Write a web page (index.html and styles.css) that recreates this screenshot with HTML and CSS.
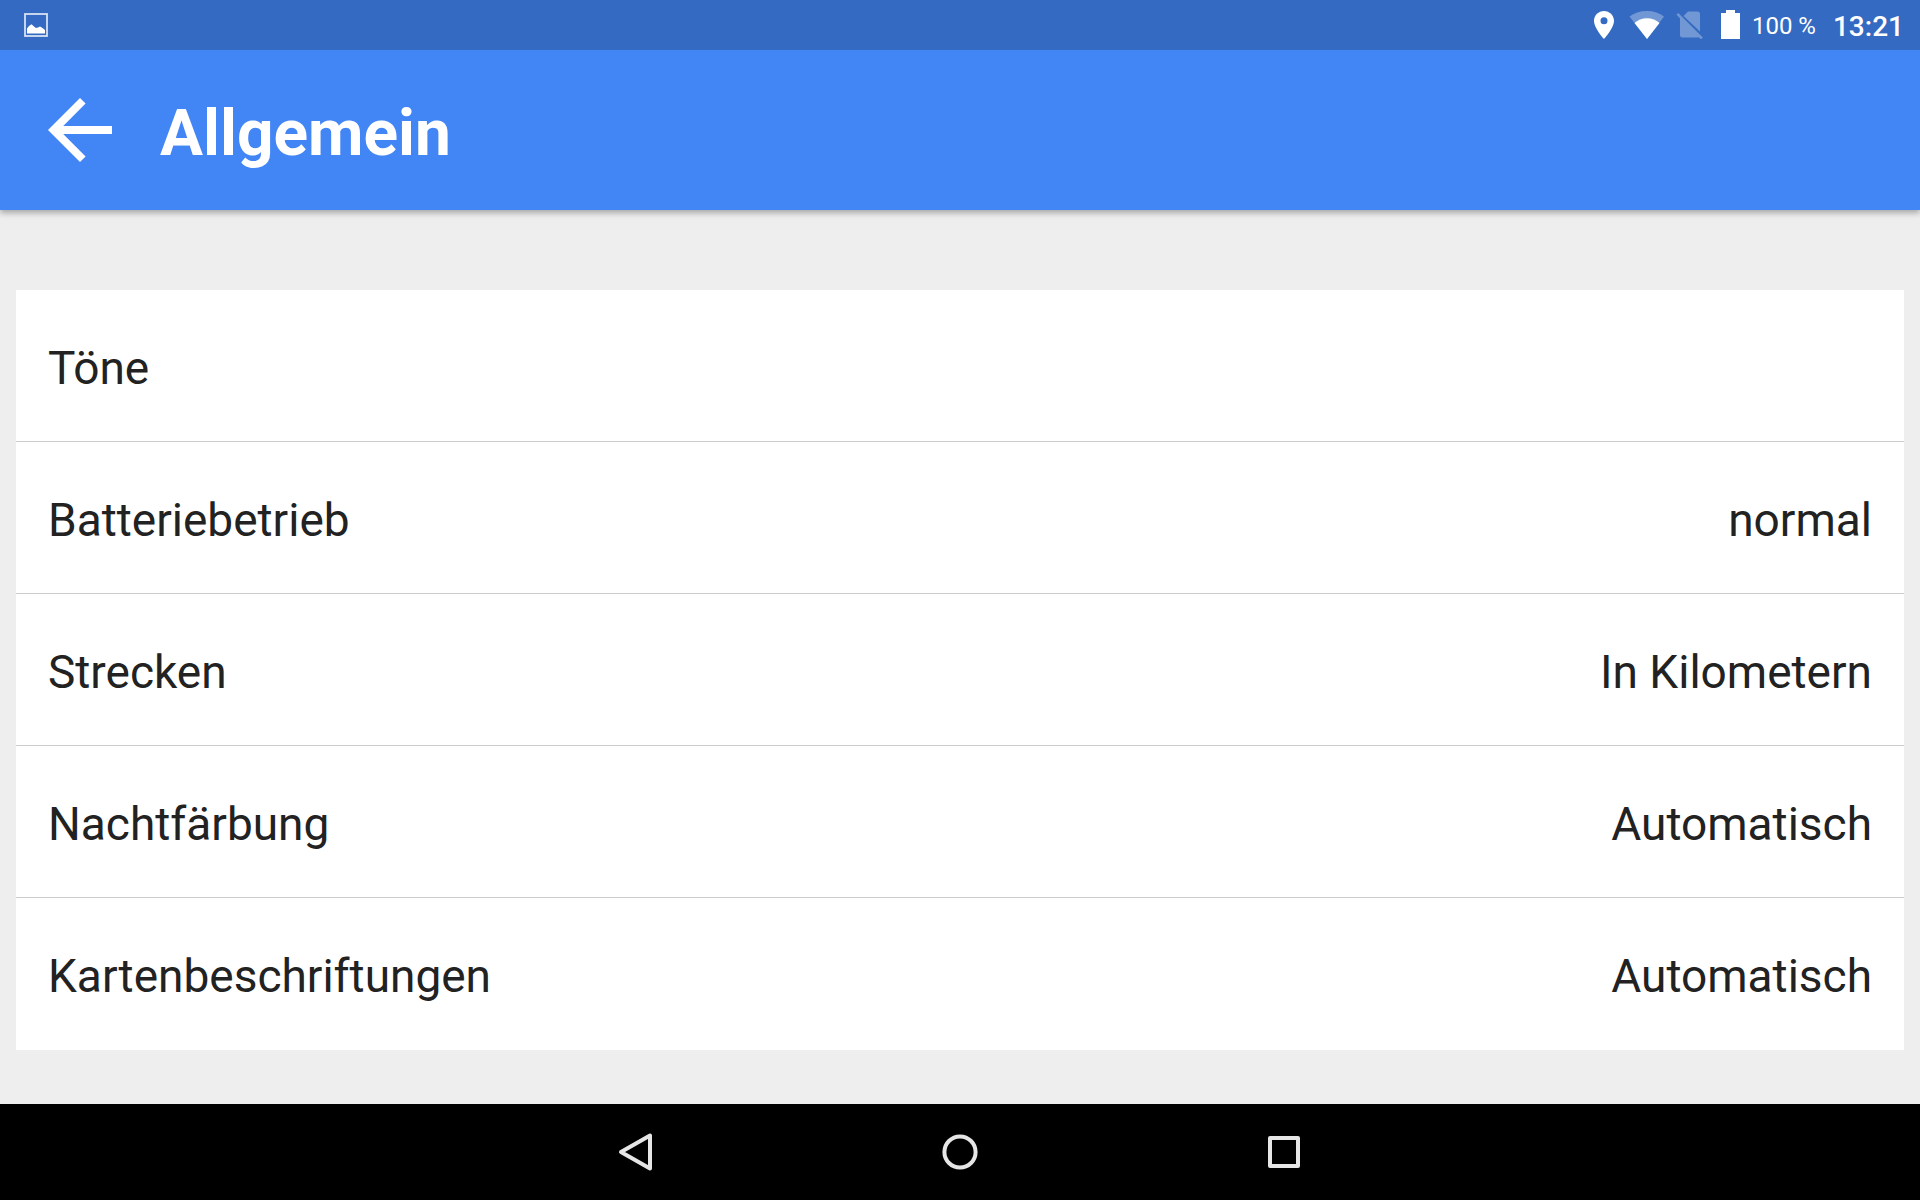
FILE: index.html
```html
<!DOCTYPE html>
<html lang="de">
<head>
    <meta charset="UTF-8">
    <meta name="viewport" content="width=device-width, initial-scale=1.0">
    <title>Allgemein</title>
    <link rel="stylesheet" href="styles.css">
</head>
<body>
    <!-- Status bar -->
    <div class="status-bar">
        <svg class="icon-picture" width="24" height="24" viewBox="0 0 24 24" aria-hidden="true">
            <rect x="1" y="1" width="22" height="22" fill="none" stroke="#fff" stroke-opacity=".8" stroke-width="1.8"/>
            <path d="M3 20.5V15.500L5 13l2.500-1.800L10 13.500l2 1.500 2-.5 2-1 2.500 1.500 2.500 2v3.500z" fill="#fff"/>
        </svg>
        <div class="status-icons">
            <svg width="24" height="28" viewBox="0 0 24 28" aria-hidden="true">
                <path fill="#fff" fill-rule="evenodd" d="M12 0C6.500 0 2 4.400 2 9.800 2 17.200 12 28 12 28s10-10.800 10-18.200C22 4.400 17.500 0 12 0zm0 13.300a3.500 3.500 0 1 1 0-7 3.500 3.500 0 0 1 0 7z"/>
            </svg>
            <svg width="36" height="28" viewBox="0 0 36 28" aria-hidden="true">
                <path fill="#fff" fill-opacity=".3" d="M19 28L1.500 5.500C6 2 12 0 19 0s12.500 2 17 5.500z"/>
                <path fill="#fff" d="M19 28L6.500 12C10 9.200 14 7.300 19 7.300S28 9.200 31.500 12z"/>
            </svg>
            <svg width="32" height="28" viewBox="0 0 32 28" aria-hidden="true">
                <g fill="#fff" fill-opacity=".3">
                    <path d="M24 20.500V3a2.500 2.500 0 0 0-2.500-2.500H12L7.500 5z"/>
                    <path d="M2.300 2L.5 3.800 4 7.300V24a2.500 2.500 0 0 0 2.500 2.500h15c.5 0 .9-.1 1.200-.3l2.300 2.200 1.800-1.800z"/>
                </g>
            </svg>
            <svg width="20" height="30" viewBox="0 0 20 30" aria-hidden="true">
                <path fill="#fff" d="M6 0h9v3h5v26H1V3h5z"/>
            </svg>
            <span class="battery">100 %</span>
            <span class="clock">13:21</span>
        </div>
    </div>

    <!-- App bar -->
    <header class="app-bar">
        <button class="back" aria-label="Zurück">
            <svg width="96" height="96" viewBox="0 0 24 24" aria-hidden="true">
                <path fill="#fff" d="M20 11H7.800l5.600-5.600L12 4l-8 8 8 8 1.400-1.400L7.800 13H20z"/>
            </svg>
        </button>
        <h1>Allgemein</h1>
    </header>

    <!-- Settings -->
    <main class="content">
        <ul class="settings">
            <li><button class="setting"><span>Töne</span></button></li>
            <li><button class="setting"><span>Batteriebetrieb</span><span>normal</span></button></li>
            <li><button class="setting"><span>Strecken</span><span>In Kilometern</span></button></li>
            <li><button class="setting"><span>Nachtfärbung</span><span>Automatisch</span></button></li>
            <li><button class="setting"><span>Kartenbeschriftungen</span><span>Automatisch</span></button></li>
        </ul>
    </main>

    <!-- System navigation -->
    <nav class="nav-bar">
        <button aria-label="Zurück">
            <svg width="40" height="40" viewBox="0 0 40 40" aria-hidden="true">
                <path d="M34 3.500v33L5 20z"/>
            </svg>
        </button>
        <button aria-label="Startseite">
            <svg width="40" height="40" viewBox="0 0 40 40" aria-hidden="true">
                <circle cx="20" cy="20" r="15.600"/>
            </svg>
        </button>
        <button aria-label="Übersicht">
            <svg width="40" height="40" viewBox="0 0 40 40" aria-hidden="true">
                <rect x="6" y="6" width="28" height="28"/>
            </svg>
        </button>
    </nav>
</body>
</html>
```
FILE: styles.css
```css
* {
    box-sizing: border-box;
}

body {
    display: flex;
    flex-direction: column;
    min-height: 100vh;
    margin: 0;
    font-family: Roboto, sans-serif;
    color: #222222;
    background-color: #eeeeee;
}

button {
    padding: 0;
    border: none;
    background: none;
    font: inherit;
    color: inherit;
    cursor: pointer;
}

svg {
    display: block;
}

/* sits above the app bar's shadow */
.status-bar {
    position: relative;
    z-index: 1;
    display: flex;
    align-items: center;
    justify-content: space-between;
    height: 50px;
    padding: 0 16px 0 24px;
    color: #fff;
    background-color: #346ac2;
}

.status-icons {
    display: flex;
    align-items: center;
    gap: 12px;
}

.battery {
    padding-top: 2px;
    font-size: 24px;
}

.clock {
    margin-left: 5px;
    padding-top: 2px;
    font-size: 28px;
    font-weight: 500;
}

.app-bar {
    display: flex;
    align-items: center;
    gap: 32px;
    height: 160px;
    padding: 0 32px;
    color: #fff;
    background-color: #4285f5;
    box-shadow: 0 3px 6px rgba(0, 0, 0, 0.3);
}

.app-bar h1 {
    margin: 0;
    padding-top: 6px;
    font-size: 64px;
    font-weight: 700;
}

.content {
    flex: 1;
    padding: 80px 16px 54px;
}

.settings {
    margin: 0;
    padding: 0;
    list-style: none;
    background-color: #fff;
}

.settings li {
    border-bottom: 1px solid #cccccc;
}

.settings li:last-child {
    border-bottom-color: #fff;
}

.setting {
    display: flex;
    align-items: center;
    justify-content: space-between;
    width: 100%;
    height: 151px;
    padding: 4px 32px 0;
    font-size: 46px;
    text-align: left;
}

.nav-bar {
    display: flex;
    justify-content: center;
    height: 96px;
    background-color: #000;
}

.nav-bar button {
    display: flex;
    flex: 0 1 324px;
    align-items: center;
    justify-content: center;
}

.nav-bar svg {
    fill: none;
    stroke: #e6e6e6;
    stroke-width: 4;
    stroke-linejoin: round;
}
```
